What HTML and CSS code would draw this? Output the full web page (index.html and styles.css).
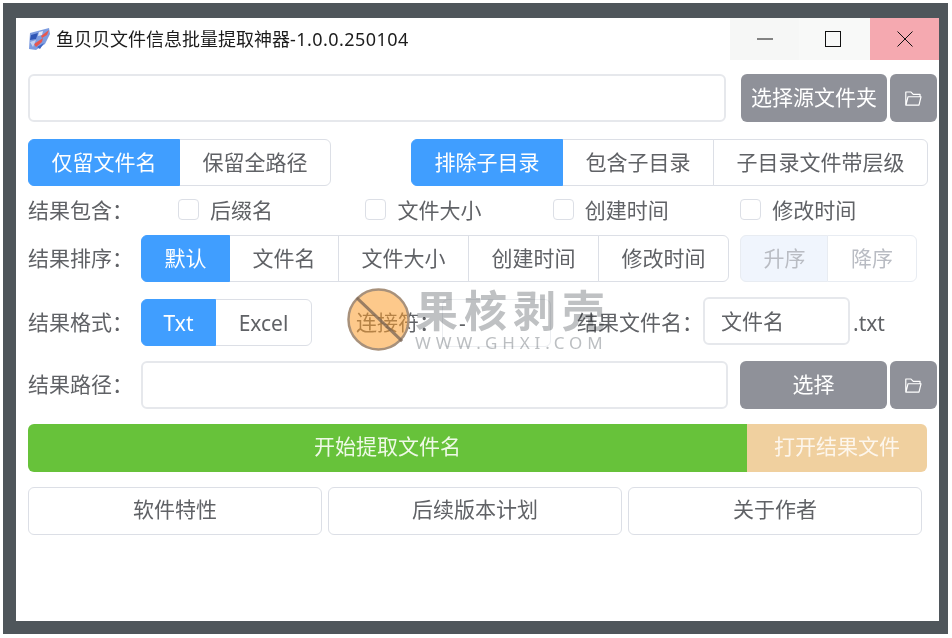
FILE: index.html
```html
<!DOCTYPE html>
<html lang="en">
<head>
    <meta charset="UTF-8">
    <meta name="viewport" content="width=device-width, initial-scale=1.0">
    <title>鱼贝贝文件信息批量提取神器</title>
    <link rel="stylesheet" href="styles.css">
</head>
<body>
    <div class="desktop">
        <div class="window">
            <!-- Title bar -->
            <div class="titlebar">
                <svg class="app-icon" viewBox="0 0 24 24">
                    <path d="M3 6 L22 1 L23 7 L18 17 L9 23 L2 22 Z" fill="#7d9ce0"/>
                    <path d="M4 8 L11 6 L9 12 L3 13 Z" fill="#2f55b5"/>
                    <path d="M12 5 L16 4 L15 8 L11 9 Z" fill="#e4e9f8"/>
                    <path d="M14 9 L22 3 L20 8 L15 11 Z" fill="#e8574f"/>
                    <path d="M7 17 L16 11 L15 15 L9 20 Z" fill="#e8574f"/>
                    <path d="M3 15 L9 13 L6 20 Z" fill="#c6d2f0"/>
                    <path d="M10 20 L17 16 L13 22 Z" fill="#3f66c4"/>
                </svg>
                <span class="title">鱼贝贝文件信息批量提取神器<span class="version">-1.0.0.250104</span></span>
                <div class="win-controls">
                    <div class="win-btn min">
                        <svg viewBox="0 0 16 16"><path d="M0 8H16"/></svg>
                    </div>
                    <div class="win-btn max">
                        <svg viewBox="0 0 16 16"><rect x="0.5" y="0.5" width="15" height="15"/></svg>
                    </div>
                    <div class="win-btn close">
                        <svg viewBox="0 0 16 16"><path d="M0.5 0.5L15.5 15.5M15.5 0.5L0.5 15.5"/></svg>
                    </div>
                </div>
            </div>

            <!-- Source folder -->
            <div class="row row-source">
                <div class="input grow"></div>
                <button class="btn gray source-btn">选择源文件夹</button>
                <button class="btn gray folder-btn">
                    <svg viewBox="0 0 1024 1024"><path d="M878.08 448H241.92l-96 384h636.16l96-384zM832 384v-64H485.76L357.504 192H128v448l57.92-231.744A32 32 0 0 1 216.96 384H832zm-24.96 512H96a32 32 0 0 1-32-32V160a32 32 0 0 1 32-32h287.872l128.384 128H864a32 32 0 0 1 32 32v96h23.04a32 32 0 0 1 31.04 39.744l-112 448A32 32 0 0 1 807.04 896z"/></svg>
                </button>
            </div>

            <!-- Path mode / sub folders -->
            <div class="row row-mode">
                <div class="seg">
                    <button class="active">仅留文件名</button>
                    <button>保留全路径</button>
                </div>
                <div class="seg seg-sub">
                    <button class="active">排除子目录</button>
                    <button>包含子目录</button>
                    <button>子目录文件带层级</button>
                </div>
            </div>

            <!-- Result columns -->
            <div class="row row-check">
                <span class="check-label">结果包含：</span>
                <label class="check"><span class="box"></span>后缀名</label>
                <label class="check"><span class="box"></span>文件大小</label>
                <label class="check"><span class="box"></span>创建时间</label>
                <label class="check"><span class="box"></span>修改时间</label>
            </div>

            <!-- Sort -->
            <div class="row">
                <span class="label">结果排序：</span>
                <div class="seg">
                    <button class="active">默认</button>
                    <button>文件名</button>
                    <button>文件大小</button>
                    <button>创建时间</button>
                    <button>修改时间</button>
                </div>
                <div class="seg seg-order">
                    <button class="off-active">升序</button>
                    <button class="off">降序</button>
                </div>
            </div>

            <!-- Format -->
            <div class="row row-format">
                <span class="label">结果格式：</span>
                <div class="seg">
                    <button class="active fmt-txt">Txt</button>
                    <button class="fmt-excel">Excel</button>
                </div>
                <span class="join-label">连接符：</span>
                <div class="input join-input">-</div>
                <span class="name-label">结果文件名：</span>
                <div class="input name-input">文件名</div>
                <span class="ext">.txt</span>
            </div>

            <!-- Result path -->
            <div class="row row-path">
                <span class="label">结果路径：</span>
                <div class="input grow"></div>
                <button class="btn gray path-btn">选择</button>
                <button class="btn gray folder-btn">
                    <svg viewBox="0 0 1024 1024"><path d="M878.08 448H241.92l-96 384h636.16l96-384zM832 384v-64H485.76L357.504 192H128v448l57.92-231.744A32 32 0 0 1 216.96 384H832zm-24.96 512H96a32 32 0 0 1-32-32V160a32 32 0 0 1 32-32h287.872l128.384 128H864a32 32 0 0 1 32 32v96h23.04a32 32 0 0 1 31.04 39.744l-112 448A32 32 0 0 1 807.04 896z"/></svg>
                </button>
            </div>

            <!-- Start -->
            <div class="row row-start">
                <button class="start">开始提取文件名</button>
                <button class="open">打开结果文件</button>
            </div>

            <!-- Info -->
            <div class="row row-info">
                <button class="btn plain">软件特性</button>
                <button class="btn plain">后续版本计划</button>
                <button class="btn plain">关于作者</button>
            </div>

            <!-- Site watermark -->
            <div class="watermark">
                <svg class="wm-logo" viewBox="0 0 64 64">
                    <circle cx="32" cy="32" r="30.5"/>
                    <path d="M10 10L56 54"/>
                </svg>
                <div class="wm-text">
                    <div class="wm-big">果核剥壳</div>
                    <div class="wm-small">WWW.GHXI.COM</div>
                </div>
            </div>
        </div>
    </div>
</body>
</html>
```

FILE: styles.css
```css
* {
    margin: 0;
    padding: 0;
    box-sizing: border-box;
    font-family: "Noto Sans", "Noto Sans CJK SC", sans-serif;
}

html, body {
    height: 100%;
    background: #fff;
}

.desktop {
    width: 945px;
    height: 631px;
    margin: 3px 0 0 3px;
    padding: 15px 9px 13px 13px;
    background: #4f565b;
}

.window {
    position: relative;
    width: 923px;
    height: 603px;
    padding: 0 2px 0 12px;
    background: #fff;
    color: #606266;
    font-size: 21px;
}

/* title bar */
.titlebar {
    display: flex;
    align-items: center;
    height: 42px;
    margin: 0 -2px 0 -12px;
    padding-left: 11px;
}

.app-icon {
    width: 24px;
    height: 24px;
    flex: none;
}

.title {
    margin-left: 5px;
    padding-bottom: 2px;
    font-size: 18px;
    color: #1c1c1c;
    white-space: nowrap;
}

.version {
    letter-spacing: 0.45px;
}

.win-controls {
    display: flex;
    height: 100%;
    margin-left: auto;
}

.win-btn {
    display: flex;
    justify-content: center;
    align-items: center;
    width: 69px;
    background: #f6f7f6;
}

.win-btn.max {
    width: 71px;
    padding-right: 3px;
    background: #f8f9f8;
}

.win-btn.close {
    background: #f5a9b0;
}

.win-btn svg {
    width: 16px;
    height: 16px;
    fill: none;
    stroke: #111;
    stroke-width: 1;
}

/* rows */
.row {
    display: flex;
    align-items: center;
    height: 47px;
}

.row-source {
    height: 48px;
    margin-top: 14px;
}

.row-mode {
    margin-top: 17px;
}

.row-check {
    height: 49px;
    padding-bottom: 4px;
}

.row-format {
    margin-top: 17px;
}

.row-path {
    height: 48px;
    margin-top: 15px;
}

.row-start {
    height: 48px;
    margin-top: 15px;
}

.row-info {
    height: 48px;
    margin-top: 15px;
    gap: 6px;
}

.label {
    flex: none;
    width: 113px;
    padding-bottom: 4px;
    white-space: nowrap;
}

.input {
    height: 48px;
    padding: 0 16px;
    line-height: 44px;
    background: #fff;
    border: 2px solid #e6e8ec;
    border-radius: 6px;
}

.grow {
    flex: 1;
}

/* buttons */
button {
    font-size: 21px;
    color: #606266;
    background: #fff;
    border: none;
}

.btn {
    height: 48px;
    padding-bottom: 4px;
    border-radius: 6px;
}

.gray {
    color: #fff;
    background: #8f9199;
}

.source-btn {
    width: 146px;
    margin-left: 15px;
}

.path-btn {
    width: 147px;
    margin-left: 12px;
}

.folder-btn {
    display: flex;
    justify-content: center;
    align-items: center;
    width: 47px;
    margin-left: 3px;
    padding-bottom: 0;
}

.folder-btn svg {
    width: 19px;
    height: 19px;
    fill: #fff;
}

.plain {
    width: 294px;
    padding-bottom: 6px;
    border: 1px solid #dcdfe6;
}

.start {
    width: 719px;
    height: 48px;
    padding-bottom: 6px;
    color: #eef9e6;
    background: #67c23a;
    border-radius: 6px 0 0 6px;
}

.open {
    width: 180px;
    height: 48px;
    padding-bottom: 6px;
    color: #fdf6ec;
    background: #f0d09f;
    border-radius: 0 6px 6px 0;
}

/* segmented buttons */
.seg {
    display: flex;
    flex: none;
    height: 47px;
}

.seg button {
    height: 47px;
    margin-left: -1px;
    padding: 0 22.5px 4px;
    white-space: nowrap;
    border: 1px solid #dcdfe6;
}

.seg button:first-child {
    margin-left: 0;
    border-radius: 6px 0 0 6px;
}

.seg button:last-child {
    border-radius: 0 6px 6px 0;
}

.seg .active {
    position: relative;
    color: #fff;
    background: #409eff;
    border-color: #409eff;
}

.seg-sub {
    margin-left: 80px;
}

.seg-order {
    margin-left: 11px;
}

.seg .off-active {
    width: 88px;
    color: #b9bcc3;
    background: #f0f5fd;
    border-color: #e8ecf2;
}

.seg .off {
    width: 90px;
    color: #b9bcc3;
    border-color: #e8ecf2;
}

.seg .fmt-txt {
    width: 75px;
    padding: 0;
}

.seg .fmt-excel {
    width: 97px;
    padding: 0;
}

/* check row */
.check-label {
    flex: none;
    width: 150px;
    white-space: nowrap;
}

.check {
    display: flex;
    align-items: center;
    flex: none;
    width: 187.4px;
    gap: 11px;
}

.box {
    width: 21px;
    height: 21px;
    margin-top: 2px;
    background: #fff;
    border: 1px solid #dcdfe6;
    border-radius: 4px;
}

/* format row */
.join-label {
    flex: none;
    width: 86px;
    margin-left: 44px;
    padding-bottom: 4px;
    white-space: nowrap;
}

.join-input {
    flex: none;
    width: 109px;
    border: 1px solid #eceef1;
    line-height: 46px;
}

.name-label {
    flex: none;
    width: 126px;
    margin-left: 26px;
    padding-bottom: 4px;
    white-space: nowrap;
}

.name-input {
    flex: none;
    width: 147px;
    margin-top: -3px;
}

.ext {
    margin-left: 3px;
}

/* watermark on top of the form */
.watermark {
    position: absolute;
    left: 331px;
    top: 270px;
    display: flex;
    gap: 5px;
    pointer-events: none;
}

.wm-logo {
    width: 63px;
    height: 63px;
    flex: none;
}

.wm-logo circle {
    fill: rgba(251, 156, 44, 0.55);
    stroke: #a8917b;
    stroke-width: 2.5;
}

.wm-logo path {
    fill: none;
    stroke: rgba(120, 100, 85, 0.75);
    stroke-width: 3;
}

.wm-text {
    width: 195px;
    mix-blend-mode: multiply;
}

.wm-big {
    font-size: 43px;
    line-height: 46px;
    font-weight: 700;
    letter-spacing: 6px;
    color: #bfc1c3;
    white-space: nowrap;
}

.wm-small {
    margin-top: -1px;
    font-size: 17px;
    line-height: 20px;
    letter-spacing: 4.9px;
    color: #bcbfc2;
    white-space: nowrap;
}
```
